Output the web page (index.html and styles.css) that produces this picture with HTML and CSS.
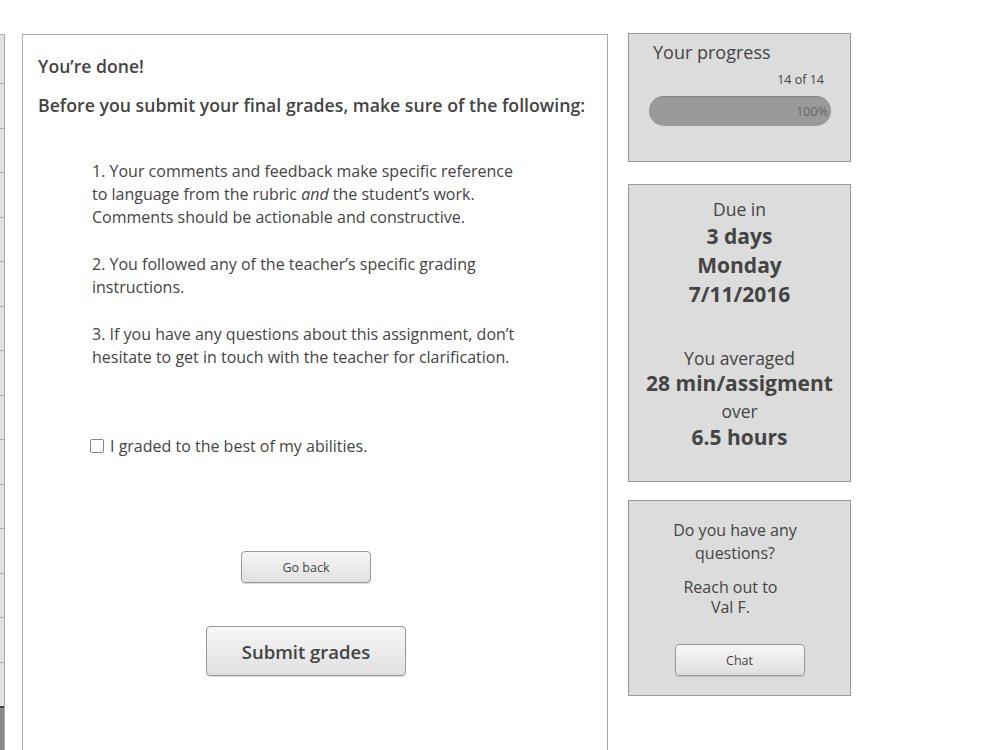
FILE: index.html
```html
<!DOCTYPE html>
<html>
<head>
<meta charset="utf-8">
<link rel="stylesheet" href="styles.css">
</head>
<body>
<div class="page">
  <div class="strip">
    <div class="cell first"></div>
    <div class="cell"></div><div class="cell"></div><div class="cell"></div>
    <div class="cell"></div><div class="cell"></div><div class="cell"></div>
    <div class="cell"></div><div class="cell"></div><div class="cell"></div>
    <div class="cell"></div><div class="cell"></div><div class="cell"></div>
    <div class="cell"></div><div class="cell"></div>
    <div class="cell dark"></div>
  </div>

  <main class="card-main">
    <h1 class="title">You’re done!</h1>
    <h2 class="subtitle">Before you submit your final grades, make sure of the following:</h2>
    <div class="list">
      <p>1. Your comments and feedback make specific reference to language from the rubric <em>and</em> the student’s work. Comments should be actionable and constructive.</p>
      <p>2. You followed any of the teacher’s specific grading instructions.</p>
      <p>3. If you have any questions about this assignment, don’t hesitate to get in touch with the teacher for clarification.</p>
    </div>
    <label class="check"><span class="box"></span>I graded to the best of my abilities.</label>
    <div class="actions">
      <button class="btn btn-small">Go back</button>
      <button class="btn btn-large">Submit grades</button>
    </div>
  </main>

  <aside class="side">
    <section class="panel progress">
      <div class="progress-title">Your progress</div>
      <div class="progress-count">14 of 14</div>
      <div class="bar"><span>100%</span></div>
    </section>
    <section class="panel due">
      <div class="t">Due in</div>
      <div class="b">3 days</div>
      <div class="b">Monday</div>
      <div class="b">7/11/2016</div>
      <div class="t avg">You averaged</div>
      <div class="b b2">28 min/assigment</div>
      <div class="t over">over</div>
      <div class="b b3">6.5 hours</div>
    </section>
    <section class="panel help">
      <p class="q">Do you have any<br>questions?</p>
      <p class="r">Reach out to<br>Val F.</p>
      <button class="btn btn-small chat">Chat</button>
    </section>
  </aside>
</div>
</body>
</html>
```

FILE: styles.css
```css
* { box-sizing: border-box; }
html, body { margin: 0; padding: 0; background: #fff; }
body {
  font-family: "Open Sans", "Noto Sans", sans-serif;
  color: #444;
  overflow: hidden;
  height: 750px;
}
.page {
  display: flex;
  align-items: flex-start;
}
.strip {
  width: 5px;
  margin-top: 34px;
  display: flex;
  flex-direction: column;
  border-right: 1px solid #aaa;
}
.cell {
  height: 44.5px;
  background: #e2e2e2;
  border-top: 1px solid #aaa;
}
.cell.first { height: 49px; }
.cell.dark { background: #8a8a8a; border-top: 2px solid #444; height: 60px; }

.card-main {
  margin-left: 17px;
  margin-top: 34px;
  width: 586px;
  height: 740px;
  border: 1px solid #aaa;
  border-bottom: none;
  padding: 19px 15px 0 15px;
}
.title {
  margin: 0;
  font-size: 17.6px;
  font-weight: 600;
  line-height: 24px;
}
.subtitle {
  margin: 15px 0 0 0;
  font-size: 17.7px;
  font-weight: 600;
  line-height: 24px;
}
.list {
  margin: 43px 0 0 54px;
  width: 432px;
  font-size: 16px;
  line-height: 23px;
}
.list p { margin: 0 0 24px 0; }
.list em { font-style: italic; }
.check {
  display: flex;
  align-items: center;
  margin: 66px 0 0 52px;
  font-size: 16px;
  line-height: 22px;
}
.box {
  width: 14px;
  height: 14px;
  border: 1px solid #888;
  border-radius: 2px;
  background: #fff;
  margin-right: 6px;
}
.actions {
  display: flex;
  flex-direction: column;
  align-items: center;
  margin-top: 94px;
  padding-right: 18px;
  gap: 43px;
}
.btn {
  font-family: "Open Sans", "Noto Sans", sans-serif;
  color: #444;
  border: 1px solid #999;
  border-radius: 4px;
  background: linear-gradient(#f7f7f7, #e0e0e0);
  box-shadow: 0 1px 1px rgba(0,0,0,0.15);
  padding: 0;
}
.btn-small {
  width: 130px;
  height: 32px;
  font-size: 12.5px;
}
.btn-large {
  width: 200px;
  height: 50px;
  font-size: 18.5px;
  font-weight: 600;
}

.side {
  margin-left: 20px;
  margin-top: 33px;
  width: 223px;
  display: flex;
  flex-direction: column;
}
.panel {
  background: #dcdcdc;
  border: 1px solid #999;
}
.progress {
  height: 129px;
  padding: 6px 19px 0 20px;
}
.progress-title {
  font-size: 18px;
  line-height: 24px;
  padding-left: 4px;
}
.progress-count {
  text-align: right;
  font-size: 12.5px;
  line-height: 18px;
  margin-top: 7px;
  padding-right: 7px;
}
.bar {
  margin-top: 7px;
  height: 30px;
  border-radius: 15px;
  background: #9a9a9a;
  box-shadow: inset 0 1px 1px rgba(0,0,0,0.15);
  display: flex;
  align-items: center;
  justify-content: flex-end;
  padding-right: 3px;
  font-size: 12.5px;
  color: #666;
}
.due {
  margin-top: 22px;
  height: 298px;
  padding-top: 11px;
  text-align: center;
}
.due .t { font-size: 17.5px; line-height: 26px; }
.due .b { font-size: 21px; font-weight: 700; line-height: 29px; }
.due .avg { margin-top: 36px; }
.due .b2 { line-height: 24px; }
.due .over { line-height: 32px; }
.due .b3 { line-height: 20px; }
.help {
  margin-top: 18px;
  height: 196px;
  padding-top: 18px;
  text-align: center;
  display: flex;
  flex-direction: column;
  align-items: center;
  font-size: 16px;
}
.help p { margin: 0; }
.q { line-height: 23px; padding-right: 9px; }
.r { margin-top: 12px !important; line-height: 20px; padding-right: 18px; }
.chat { margin-top: 27px; }
```
